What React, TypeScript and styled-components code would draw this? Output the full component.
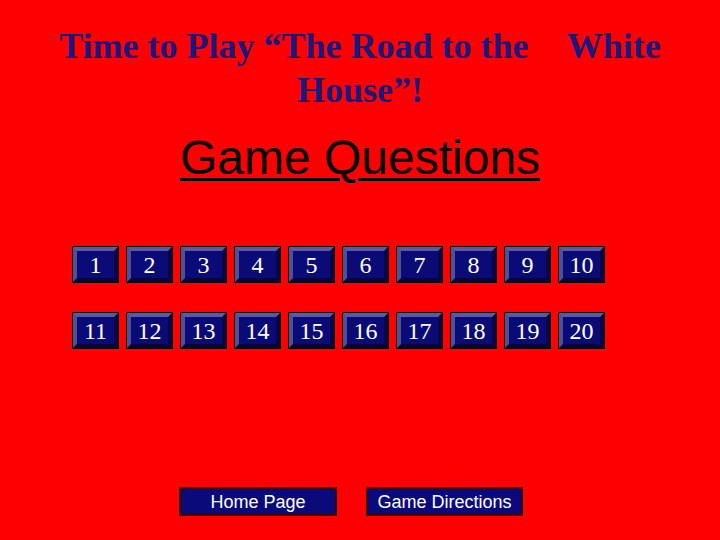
import React from "react";
import styled, { createGlobalStyle } from "styled-components";

const GlobalStyle = createGlobalStyle`
  html, body {
    margin: 0;
    padding: 0;
    background: #ff0000;
  }
`;

const Page = styled.main`
  width: 720px;
  height: 540px;
  background: #ff0000;
  display: flex;
  flex-direction: column;
  overflow: hidden;
`;

const Title = styled.h1`
  margin: 0;
  padding-top: 24px;
  font-family: "Liberation Serif", "Times New Roman", serif;
  font-weight: bold;
  font-size: 36px;
  line-height: 44px;
  color: #18187f;
  text-align: center;
`;

const TitleGap = styled.span`
  display: inline-block;
  width: 30px;
`;

const Heading = styled.h2`
  margin: 18px 0 0;
  font-family: "Liberation Sans", Arial, sans-serif;
  font-weight: normal;
  font-size: 48px;
  line-height: 56px;
  color: #000;
  text-align: center;
  text-decoration: underline;
  text-decoration-thickness: 3px;
  text-underline-offset: 4px;
`;

const QuestionGrid = styled.div`
  margin-top: 60px;
  padding-left: 72px;
  display: grid;
  grid-template-columns: repeat(10, 47px);
  grid-auto-rows: 37px;
  column-gap: 7px;
  row-gap: 29px;
`;

const QuestionButton = styled.button`
  box-sizing: border-box;
  width: 47px;
  height: 37px;
  padding: 0;
  margin: 0;
  display: flex;
  background: #1a0000;
  border: 1px solid #1a0000;
  cursor: pointer;
`;

/* bevelled face inside the dark outline */
const QuestionFace = styled.span`
  box-sizing: border-box;
  flex: 1;
  display: flex;
  align-items: center;
  justify-content: center;
  background: #0b0b78;
  border-style: solid;
  border-width: 4px;
  border-color: #5a5aa2 #08083e #050536 #50509a;
  font-family: "Liberation Serif", "Times New Roman", serif;
  font-size: 24px;
  line-height: 1;
  color: #ffffff;
`;

const NavRow = styled.nav`
  margin-top: 138px;
  padding-left: 179px;
  display: flex;
  gap: 29px;
`;

const NavButton = styled.button<{ $width: number }>`
  box-sizing: border-box;
  width: ${(p) => p.$width}px;
  height: 29px;
  padding: 0;
  margin: 0;
  background: #0a0a7a;
  border: 2px solid #3a0000;
  font-family: "Liberation Sans", Arial, sans-serif;
  font-size: 18px;
  line-height: 1;
  color: #ffffff;
  cursor: pointer;
`;

const questions = Array.from({ length: 20 }, (_, i) => i + 1);

export default function App() {
  return (
    <>
      <GlobalStyle />
      <Page>
        <Title>
          Time to Play “The Road to the
          <TitleGap /> White
          <br />
          House”!
        </Title>
        <Heading>Game Questions</Heading>
        <QuestionGrid>
          {questions.map((n) => (
            <QuestionButton key={n}>
              <QuestionFace>{n}</QuestionFace>
            </QuestionButton>
          ))}
        </QuestionGrid>
        <NavRow>
          <NavButton $width={158}>Home Page</NavButton>
          <NavButton $width={157}>Game Directions</NavButton>
        </NavRow>
      </Page>
    </>
  );
}
